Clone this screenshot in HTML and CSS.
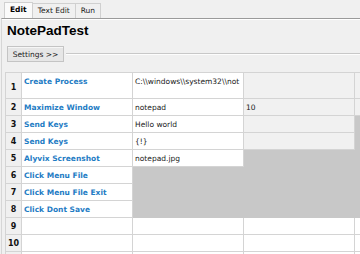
FILE: index.html
```html
<!DOCTYPE html>
<html lang="en">
  <head>
    <meta charset="UTF-8" />
    <title>NotePadTest</title>
    <link rel="stylesheet" href="styles.css">
  </head>
  <body>
    <div class="tabs">
      <span class="tab active">Edit</span>
      <span class="tab">Text Edit</span>
      <span class="tab">Run</span>
    </div>
    <div class="panel">
      <h1 class="title">NotePadTest</h1>
      <div class="settings">
        <button class="settings-btn">Settings &gt;&gt;</button>
        <span class="rule"></span>
      </div>
      <table class="grid">
        <colgroup>
          <col class="c-num" />
          <col class="c-wide" />
          <col class="c-wide" />
          <col class="c-wide" />
          <col />
        </colgroup>
        <tr class="tall">
          <th>1</th>
          <td class="action">Create Process</td>
          <td class="val">C:\\windows\\system32\\not</td>
          <td class="light"></td>
          <td class="light"></td>
        </tr>
        <tr>
          <th>2</th>
          <td class="action">Maximize Window</td>
          <td class="val">notepad</td>
          <td class="light">10</td>
          <td class="light"></td>
        </tr>
        <tr>
          <th>3</th>
          <td class="action">Send Keys</td>
          <td class="val">Hello world</td>
          <td class="light"></td>
          <td class="off"></td>
        </tr>
        <tr>
          <th>4</th>
          <td class="action">Send Keys</td>
          <td class="val">{!}</td>
          <td class="light"></td>
          <td class="off"></td>
        </tr>
        <tr>
          <th>5</th>
          <td class="action">Alyvix Screenshot</td>
          <td class="val">notepad.jpg</td>
          <td class="off"></td>
          <td class="off"></td>
        </tr>
        <tr>
          <th>6</th>
          <td class="action">Click Menu File</td>
          <td class="off"></td>
          <td class="off"></td>
          <td class="off"></td>
        </tr>
        <tr>
          <th>7</th>
          <td class="action">Click Menu File Exit</td>
          <td class="off"></td>
          <td class="off"></td>
          <td class="off"></td>
        </tr>
        <tr>
          <th>8</th>
          <td class="action">Click Dont Save</td>
          <td class="off"></td>
          <td class="off"></td>
          <td class="off"></td>
        </tr>
        <tr>
          <th>9</th>
          <td></td>
          <td></td>
          <td></td>
          <td></td>
        </tr>
        <tr>
          <th>10</th>
          <td></td>
          <td></td>
          <td></td>
          <td></td>
        </tr>
        <tr>
          <th></th>
          <td></td>
          <td></td>
          <td></td>
          <td></td>
        </tr>
      </table>
    </div>
  </body>
</html>
```

FILE: styles.css
```css
* {
  margin: 0;
  padding: 0;
  box-sizing: border-box;
}
body {
  width: 360px;
  height: 254px;
  overflow: hidden;
  background: #f0f0f0;
  font-family: "DejaVu Sans", Verdana, sans-serif;
  font-size: 7.5px;
  color: #1a1a1a;
}
.tabs {
  display: flex;
  align-items: flex-end;
  height: 18px;
  padding-left: 4px;
}
.tab {
  height: 15px;
  line-height: 14px;
  padding: 0 5px;
  border: 1px solid #d0d0d0;
  border-bottom: none;
  border-left: none;
  color: #222;
}
.tab.active {
  height: 16px;
  border-left: 1px solid #d0d0d0;
  background: #fafafa;
  font-weight: bold;
  color: #000;
}
.panel {
  border-top: 1px solid #9a9a9a;
  border-left: 1px solid #d6d6d6;
  margin-left: 1px;
  padding: 0 0 0 3px;
  box-shadow: inset 0 1px 0 #ffffff;
}
.title {
  font-family: "Liberation Sans", Arial, sans-serif;
  font-size: 13.5px;
  font-weight: bold;
  color: #000;
  line-height: 16px;
  padding: 4px 0 0 2px;
}
.settings {
  display: flex;
  align-items: center;
  margin-top: 7px;
  padding-left: 2px;
}
.settings-btn {
  width: 57px;
  height: 16px;
  font-family: inherit;
  font-size: 7.5px;
  color: #222;
  background: #e6e6e6;
  border: 1px solid #c4c4c4;
  box-shadow: inset 0 1px 0 #f6f6f6;
}
.rule {
  flex: 1;
  height: 2px;
  margin-left: 2px;
  border-top: 1px solid #c8c8c8;
  border-bottom: 1px solid #fdfdfd;
}
.grid {
  margin-top: 10px;
  border-collapse: collapse;
  table-layout: fixed;
  width: 370px;
}
.c-num {
  width: 16px;
}
.c-wide {
  width: 111px;
}
.grid th,
.grid td {
  height: 17px;
  border: 1px solid #d4d4d4;
  white-space: nowrap;
  overflow: hidden;
  text-align: left;
  vertical-align: middle;
  padding: 0 0 0 2px;
  background: #ffffff;
}
.grid tr.tall th,
.grid tr.tall td {
  height: 26px;
  vertical-align: top;
  padding-top: 4px;
}
.grid th {
  background: #f0f0f0;
  font-weight: bold;
  text-align: center;
  padding: 0;
  color: #111;
  font-size: 8px;
}
.grid tr.tall th {
  vertical-align: middle;
  padding-top: 3px;
}
.grid td.action {
  font-weight: bold;
  color: #1e7cc4;
}
.grid td.light {
  background: #f1f1f1;
}
.grid td.off {
  background: #c8c8c8;
  border-color: #c8c8c8;
}
```
